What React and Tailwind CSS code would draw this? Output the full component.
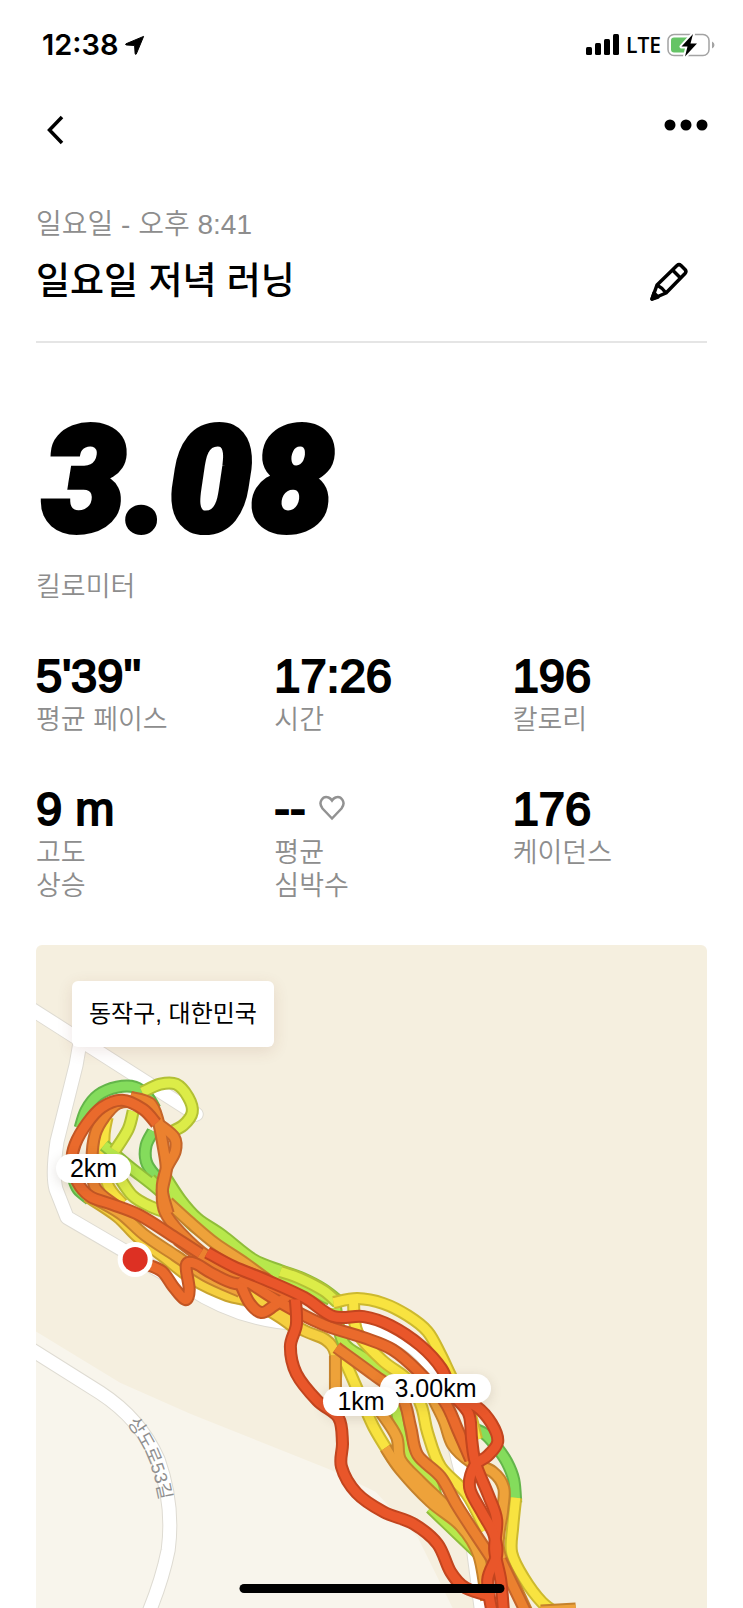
import React from 'react';
import { clsx } from 'clsx';

const STATS = [
  { value: "5'39''", label: ['평균 페이스'] },
  { value: '17:26', label: ['시간'] },
  { value: '196', label: ['칼로리'] },
  { value: '9 m', label: ['고도', '상승'] },
  { value: '--', label: ['평균', '심박수'], heart: true },
  { value: '176', label: ['케이던스'] },
];

const PINS = [
  { label: '3.00km', place: 'left-[344px] top-[429px] w-[111px]' },
  { label: '1km', place: 'left-[287px] top-[442px] w-[76px]' },
  { label: '2km', place: 'left-[20px] top-[209px] w-[75px]' },
];

const COLORS = {
  green: ['#84dc5c', '#63b54a'],
  lime: ['#b7e84c', '#8fbd3a'],
  citron: ['#dcec48', '#b2c035'],
  yellow: ['#f8e340', '#ccb92f'],
  gold: ['#f5cf40', '#c9a42e'],
  amber: ['#eea23a', '#c5822c'],
  orange: ['#eb812f', '#c4652a'],
  rust: ['#ea6a2c', '#c25624'],
  red: ['#e9562a', '#c2451f'],
};

// Layers from the bottom up. Lines of one layer share their outline.
const LAYERS = [
  ['green', [
    [80, 1129, 86, 1111, 98, 1096, 117, 1088, 135, 1088, 147, 1097, 155, 1110],
    [153, 1132, 146, 1146, 146, 1162, 154, 1175, 170, 1190],
    [73, 1178, 78, 1190, 90, 1200],
  ]],
  ['yellow', [
    [107, 1118, 104, 1135, 104, 1160, 108, 1186, 122, 1204],
  ]],
  ['lime', [
    [163, 1174, 180, 1200, 197, 1219, 222, 1236, 253, 1260, 280, 1271, 302, 1279, 323, 1290, 341, 1304],
    [104, 1146, 130, 1168, 153, 1186, 172, 1203, 193, 1226, 220, 1243, 250, 1262, 290, 1280, 330, 1300],
    [150, 1180, 180, 1208, 205, 1228, 235, 1252],
  ]],
  ['citron', [
    [142, 1093, 160, 1085, 176, 1085, 188, 1098, 192, 1113, 183, 1126, 168, 1134],
    [133, 1112, 128, 1130, 115, 1151],
    [118, 1176, 132, 1196, 150, 1207, 175, 1216],
    [280, 1272, 300, 1279, 323, 1291, 337, 1303],
  ]],
  ['gold', [
    [87, 1197, 117, 1217, 137, 1237, 163, 1257, 193, 1280, 227, 1296, 252, 1302, 280, 1318, 300, 1333],
    [240, 1288, 270, 1306, 300, 1329, 325, 1340, 335, 1354, 335, 1380],
  ]],
  ['amber', [
    [90, 1197, 120, 1214, 145, 1236, 175, 1256, 205, 1276, 240, 1292],
    [168, 1203, 190, 1223, 215, 1244, 245, 1264, 280, 1290],
  ]],
  // South half of the lap
  ['green', [
    [470, 1428, 484, 1434, 495, 1446, 506, 1462, 513, 1480, 515, 1503],
  ]],
  ['lime', [
    [335, 1308, 343, 1343, 368, 1361, 392, 1382, 397, 1417, 402, 1443, 411, 1465, 430, 1480, 436, 1500],
    [430, 1508, 455, 1532, 478, 1554],
  ]],
  ['yellow', [
    [333, 1303, 357, 1299, 383, 1304, 407, 1316, 427, 1332, 440, 1355, 452, 1380, 467, 1407, 476, 1440],
    [353, 1302, 357, 1333, 382, 1361, 408, 1381, 421, 1407, 427, 1433, 440, 1467, 466, 1494, 485, 1530],
    [343, 1358, 357, 1390, 373, 1427, 393, 1460],
    [515, 1498, 512, 1527, 511, 1553, 523, 1578, 541, 1602, 560, 1616],
  ]],
  ['amber', [
    [335, 1356, 335, 1395],
    [380, 1412, 396, 1437, 400, 1460, 420, 1482, 445, 1506, 472, 1534],
    [385, 1448, 400, 1470, 430, 1502, 460, 1526, 478, 1555, 486, 1600],
    [428, 1390, 443, 1420, 452, 1445, 470, 1462, 492, 1472, 503, 1488, 502, 1510, 498, 1550, 516, 1590, 530, 1620],
    [540, 1611, 575, 1609],
  ]],
  ['orange', [
    [336, 1348, 373, 1375, 401, 1397, 410, 1427, 417, 1455, 440, 1477, 456, 1505, 474, 1533, 492, 1560],
    [500, 1560, 512, 1585, 526, 1614],
  ]],
  // Upper half of the lap
  ['orange', [
    [150, 1115, 137, 1104, 118, 1104, 104, 1118, 95, 1135, 92, 1160, 95, 1188, 115, 1206],
    [130, 1098, 150, 1104, 158, 1122, 163, 1147, 166, 1170, 162, 1193, 165, 1213, 180, 1233, 207, 1257, 233, 1268, 267, 1280],
    [160, 1126, 174, 1138, 175, 1152, 166, 1170, 162, 1190, 168, 1214],
    [177, 1240, 207, 1262, 237, 1277, 270, 1286, 295, 1302],
  ]],
  ['rust', [
    [156, 1124, 143, 1110, 122, 1101, 102, 1108, 87, 1124, 75, 1145, 72, 1162, 77, 1182, 90, 1197, 112, 1205, 140, 1216, 175, 1238, 200, 1254],
    [147, 1265, 162, 1272, 173, 1287, 185, 1300, 189, 1290, 186, 1266, 195, 1264, 212, 1274, 235, 1284, 262, 1283, 295, 1298],
    [240, 1284, 249, 1303, 261, 1313, 274, 1306, 292, 1293],
    [240, 1277, 280, 1303, 323, 1325, 363, 1338, 392, 1350, 418, 1372, 444, 1402, 457, 1430, 470, 1460],
  ]],
  ['red', [
    [295, 1300, 296, 1325, 290, 1347, 296, 1374, 317, 1401, 338, 1418, 342, 1443, 341, 1467, 356, 1493, 383, 1512, 413, 1524, 437, 1544, 450, 1572, 465, 1588, 493, 1597],
    [207, 1253, 233, 1267, 267, 1281, 304, 1298, 333, 1317, 363, 1317, 390, 1326, 420, 1346, 441, 1369, 452, 1394, 468, 1414, 471, 1440, 475, 1464, 488, 1496, 496, 1520, 494, 1550, 500, 1580, 503, 1615],
    [455, 1398, 476, 1407, 491, 1424, 497, 1442, 487, 1456, 474, 1466, 469, 1488, 481, 1512, 493, 1534, 496, 1555, 487, 1580, 492, 1615],
  ]],
];

// Catmull-Rom spline through the recorded points
function toPath(coords) {
  const pts = [];
  for (let i = 0; i < coords.length; i += 2) pts.push([coords[i], coords[i + 1]]);
  let d = `M${pts[0][0]} ${pts[0][1]}`;
  for (let i = 0; i < pts.length - 1; i++) {
    const p0 = pts[i - 1] || pts[i];
    const p1 = pts[i];
    const p2 = pts[i + 1];
    const p3 = pts[i + 2] || p2;
    d += ` C${p1[0] + (p2[0] - p0[0]) / 6} ${p1[1] + (p2[1] - p0[1]) / 6}`;
    d += ` ${p2[0] - (p3[0] - p1[0]) / 6} ${p2[1] - (p3[1] - p1[1]) / 6} ${p2[0]} ${p2[1]}`;
  }
  return d;
}

function StatusBar() {
  return (
    <div className="flex h-[89px] items-center justify-between pl-[42px] pr-7">
      <div className="flex items-center gap-1.5 font-['Inter',sans-serif] text-[29px] font-semibold">
        12:38
        <svg className="size-5" viewBox="0 0 20 20" aria-hidden="true">
          <path d="M18.6 1.4 11.3 19q-.9 1-1.2-.6L9.6 10.500 1.500 10q-1.600-.4-.5-1.200Z" stroke="#000" strokeLinejoin="round" />
        </svg>
      </div>
      <div className="flex items-center gap-1.5">
        <svg className="h-[21px] w-[34px]" viewBox="0 0 34 21" aria-hidden="true">
          <rect x="0" y="13" width="6" height="8" rx="1.5" />
          <rect x="9" y="9" width="6" height="12" rx="1.5" />
          <rect x="18" y="5" width="6" height="16" rx="1.5" />
          <rect x="27" y="0" width="6" height="21" rx="1.5" />
        </svg>
        <span className="font-['Open_Sans',sans-serif] text-[21px] font-semibold leading-6">LTE</span>
        <svg className="h-6 w-12" viewBox="0 0 48 24" aria-hidden="true">
          <rect x="1" y="1.500" width="41" height="21" rx="6" fill="none" stroke="#a3a3a3" strokeWidth="1.500" />
          <path d="M7 4.500h15v15H7q-3 0-3-3v-9q0-3 3-3Z" fill="#65c466" />
          <path d="M45 8.500q2.500 1 2.500 3.500T45 15.500Z" fill="#a3a3a3" />
          <path d="M26 1 14.500 13.500h6L18 23.500 30 10.500h-6.500Z" stroke="#fff" strokeWidth="4" strokeLinejoin="round" />
          <path d="M26 1 14.500 13.500h6L18 23.500 30 10.500h-6.500Z" />
        </svg>
      </div>
    </div>
  );
}

function NavBar() {
  return (
    <nav className="flex h-20 items-center justify-between pl-[35px] pr-[35px]">
      <button type="button" aria-label="뒤로" className="flex size-10 items-center justify-center">
        <svg className="size-8" viewBox="0 0 32 32" fill="none" stroke="#000" strokeWidth="3.5">
          <path d="M23 4 10.500 17 23 30" />
        </svg>
      </button>
      <button type="button" aria-label="더 보기">
        <svg className="h-10 w-11" viewBox="0 0 44 40">
          <circle cx="6" cy="16" r="5.500" />
          <circle cx="22" cy="16" r="5.500" />
          <circle cx="38" cy="16" r="5.500" />
        </svg>
      </button>
    </nav>
  );
}

function Stat({ value, label, heart }) {
  return (
    <div>
      <dd className="flex items-center gap-3 text-[47px] leading-[48px] [-webkit-text-stroke:2px_black]">
        {value}
        {heart && (
          <svg className="size-7" viewBox="0 0 28 28" fill="none" stroke="#929292" strokeWidth="2.500" aria-hidden="true">
            <path d="M14 23.500 4.500 13.500C-.5 7 5 .5 10.500 2.500q2 .8 3.500 3 1.500-2.200 3.500-3C23 .5 28.500 7 23.500 13.500Z" />
          </svg>
        )}
      </dd>
      <dt className="mt-1 text-[27px] font-[350] leading-[33px] text-[#8d8d8d]">
        {label.map((line) => (
          <span key={line} className="block">{line}</span>
        ))}
      </dt>
    </div>
  );
}

function RouteMap() {
  return (
    <div className="relative min-h-[662px] flex-1 overflow-hidden rounded-t-md bg-[#f5efdf]">
      <svg
        className="absolute inset-0 size-full"
        viewBox="36 946 671 662"
        preserveAspectRatio="xMinYMin slice"
        fill="none"
        strokeLinejoin="round"
        aria-hidden="true"
      >
        <path d="M36 1332 120 1383 190 1414 330 1470 375 1492 417 1537 452 1608H36Z" fill="#f8f5ec" />
        {/* Roads */}
        {[['#dedbd2', 15], ['#fff', 13]].map(([color, width]) => (
          <g key={color} stroke={color} strokeWidth={width} strokeLinecap="round">
            <path d="M30 1009 196 1115" />
            <path d="M80 1043 76 1066 57 1142Q52 1175 56 1190L67 1218 120 1249 187 1287Q240 1322 300 1324 350 1318 390 1335T440 1390L465 1490 482 1620" />
            <path d="M30 1349 100 1393Q140 1419 158 1460 174 1505 168 1550 162 1580 148 1614" />
          </g>
        ))}
        <path id="street" d="M130 1421Q157 1456 164 1505" />
        <text fill="#8f8f8f" dy="4" className="font-['Liberation_Sans','Noto_Sans_CJK_KR',sans-serif] text-[18px]">
          <textPath href="#street">상도로53길</textPath>
        </text>
        {/* Run */}
        {LAYERS.map(([color, lines], i) => (
          <g key={i}>
            <g stroke={COLORS[color][1]} strokeWidth="13">
              {lines.map((line, j) => <path key={j} d={toPath(line)} />)}
            </g>
            <g stroke={COLORS[color][0]} strokeWidth="9">
              {lines.map((line, j) => <path key={j} d={toPath(line)} />)}
            </g>
          </g>
        ))}
        <circle cx="135" cy="1260" r="17.500" fill="#fff" />
        <circle cx="135" cy="1260" r="12.500" fill="#dd3023" />
      </svg>
      <p className="absolute left-9 top-9 rounded-md bg-white px-[17px] text-[24px] leading-[66px] shadow-[0_4px_16px_rgba(120,60,40,0.12)]">
        동작구, 대한민국
      </p>
      {PINS.map((pin) => (
        <span
          key={pin.label}
          className={clsx(
            'absolute rounded-full bg-white text-center text-[25px] leading-[29px] shadow-[0_3px_12px_rgba(80,60,40,0.15)]',
            pin.place
          )}
        >
          {pin.label}
        </span>
      ))}
    </div>
  );
}

export default function App() {
  return (
    <div className="flex min-h-screen flex-col overflow-x-hidden bg-white font-['Liberation_Sans','Noto_Sans_CJK_KR',sans-serif] text-black">
      <StatusBar />
      <NavBar />
      <main className="flex flex-1 flex-col px-9 pt-9">
        <header className="flex items-end justify-between border-b-2 border-[#e5e5e5] pb-[35px]">
          <div>
            <p className="text-[28px] font-[350] leading-10 text-[#8d8d8d]">일요일 - 오후 8:41</p>
            <h1 className="mt-[13px] text-[37px] font-medium leading-[48px]">일요일 저녁 러닝</h1>
          </div>
          <button type="button" aria-label="이름 편집" className="mr-[18px] pb-1">
            <svg className="size-10" viewBox="0 0 40 40" fill="none" stroke="#000" strokeWidth="3.500" strokeLinejoin="round">
              <path d="M3 37 8 23 28 3.500q2-1.800 4 0l4 4q1.800 2 0 4L17 31Z" />
              <path d="m23.500 8 8.500 8.500M8 23q5 2.500 9 8" />
              <path d="m3 37 2-6 4 4Z" fill="#000" />
            </svg>
          </button>
        </header>
        <p className="pl-[7px] pt-[58px] font-['Roboto',sans-serif] text-[147px] font-black italic leading-[160px] [-webkit-text-stroke:6px_black]">3.08</p>
        <p className="mt-2.5 text-[27px] font-[350] leading-[33px] text-[#8d8d8d]">킬로미터</p>
        <dl className="mb-[42px] mt-12 grid grid-cols-3 gap-x-11 gap-y-12">
          {STATS.map((stat) => (
            <Stat key={stat.label.join(' ')} {...stat} />
          ))}
        </dl>
        <RouteMap />
      </main>
      <div className="fixed bottom-[15px] left-1/2 h-[9px] w-[265px] -translate-x-1/2 rounded-full bg-black" />
    </div>
  );
}
